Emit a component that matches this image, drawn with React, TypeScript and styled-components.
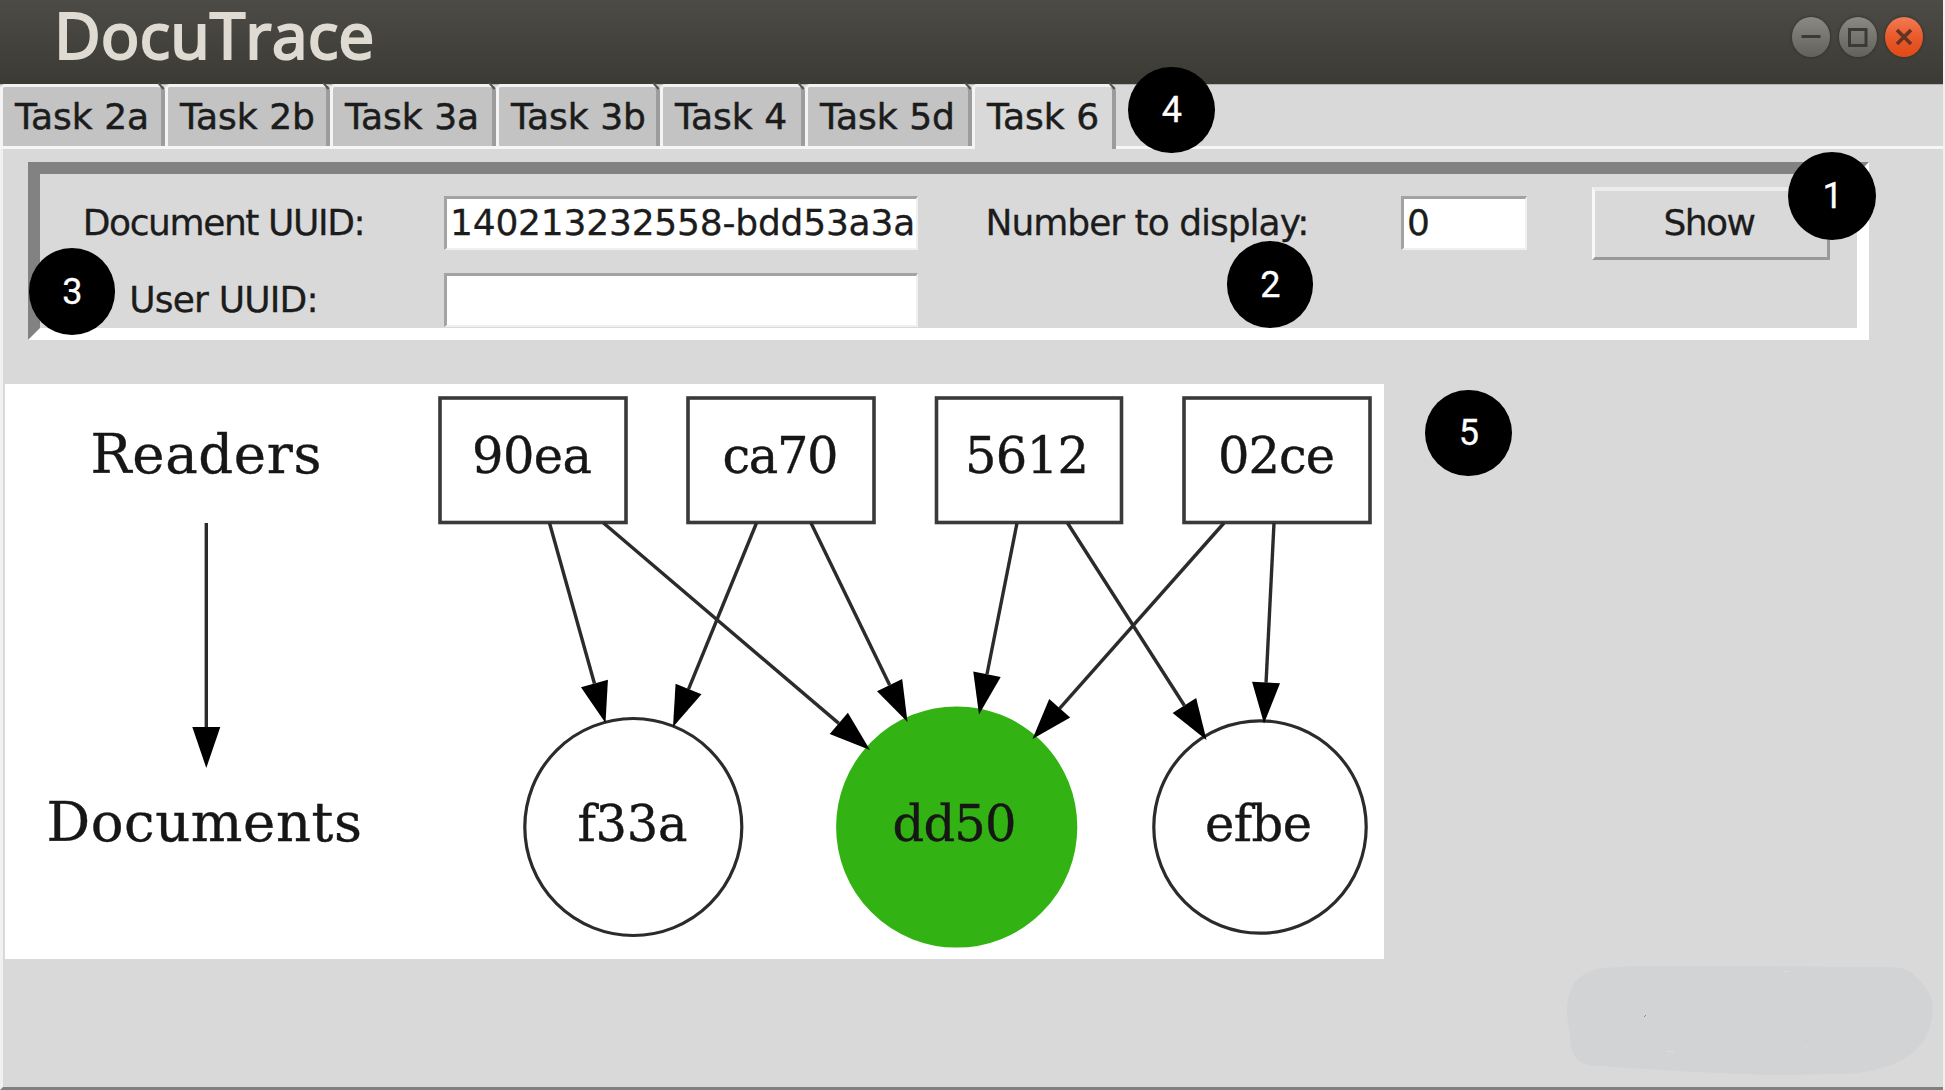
import React from "react";
import styled, { createGlobalStyle } from "styled-components";

const GlobalStyle = createGlobalStyle`
  * { box-sizing: border-box; }
  body { margin: 0; background: #d9d9d9; }
`;

const sans = `"DejaVu Sans", Verdana, sans-serif`;

const Window = styled.div`
  position: relative;
  display: flex;
  flex-direction: column;
  width: 1945px;
  height: 1090px;
  background: #d9d9d9;
  border-right: 2px solid #efefef;
  font-family: ${sans};
  color: #1c1c1c;
`;

const TitleBar = styled.header`
  display: flex;
  align-items: center;
  justify-content: space-between;
  flex: none;
  height: 84px;
  padding: 0 20px 10px 54px;
  background: linear-gradient(#4c4b45, #3b3a35);
`;

const Title = styled.h1`
  margin: 0 0 4px;
  font-family: "Noto Sans", sans-serif;
  font-size: 64px;
  font-weight: 400;
  font-kerning: none;
  line-height: 70px;
  color: #dfdbd2;
  -webkit-text-stroke: 2px #dfdbd2;
`;

const WindowButtons = styled.div`
  display: flex;
  gap: 8.5px;
`;

const WindowButton = styled.button<{ $close?: boolean }>`
  display: flex;
  align-items: center;
  justify-content: center;
  width: 38px;
  height: 40px;
  padding: 0;
  border: 0;
  border-radius: 50%;
  background: ${(p) => (p.$close ? "linear-gradient(#f37a56, #e95a2b 50%, #df4a16)" : "linear-gradient(#8a8982, #62615b)")};
  box-shadow: 0 0 2px 1px rgba(45, 44, 40, 0.55);
`;

const TabStrip = styled.nav`
  display: flex;
  flex: none;
  height: 65px;
  background: linear-gradient(#b4b4b2 0 1px, #d9d9d9 1px 62px, #f6f6f6 62px);
`;

const Tab = styled.div<{ $width: number; $active?: boolean }>`
  position: relative;
  width: ${(p) => p.$width}px;
  height: ${(p) => (p.$active ? 65 : 62)}px;
  padding: 9px 0 0 12px;
  border: solid;
  border-width: 3px 4px 0 3px;
  border-color: #f1f1f1 #9c9c9c transparent #f4f4f4;
  border-radius: 5px 7px 0 0;
  background: ${(p) => (p.$active ? "#d9d9d9" : "#c3c3c3")};
  font-size: 36px;
  line-height: 42px;
  white-space: nowrap;
  -webkit-text-stroke: 0.5px #1c1c1c;

  &::after {
    content: "";
    position: absolute;
    top: -2px;
    right: -4px;
    width: 8px;
    height: 2px;
    background: #55544f;
    transform: rotate(48deg);
  }
`;

const Page = styled.main`
  display: flex;
  flex-direction: column;
  align-items: flex-start;
  flex: 1;
  border-left: 3px solid #f1f1f1;
  border-bottom: 3px solid #808080;
  padding: 13px 0 0 2px;
`;

const QueryFrame = styled.form`
  display: grid;
  grid-template-columns: 367px 548px 384px 250px 244px;
  grid-template-rows: 98px 55px;
  width: 1841px;
  height: 178px;
  margin: 0 0 44px 23px;
  border: 12px solid;
  border-color: #828282 #fff #fff #828282;
  align-items: center;
  justify-items: center;
`;

const Label = styled.label<{ $track: number }>`
  font-size: 36px;
  line-height: 42px;
  letter-spacing: ${(p) => p.$track}px;
  white-space: nowrap;
  -webkit-text-stroke: 0.3px #1c1c1c;
`;

const Entry = styled.input<{ $width: number }>`
  width: ${(p) => p.$width}px;
  height: 54px;
  padding: 0 0 3px 3px;
  border: solid;
  border-width: 3px 2px 2px 3px;
  border-color: #a3a3a3 #f0f0f0 #f0f0f0 #a3a3a3;
  border-radius: 0;
  outline: 0;
  background: #fff;
  color: #1c1c1c;
  font: 36px ${sans};
  letter-spacing: -0.2px;
  -webkit-text-stroke: 0.3px #1c1c1c;
`;

const ShowButton = styled.button`
  width: 238px;
  height: 73px;
  margin-top: 1px;
  padding: 0 4px 4px 0;
  border: solid;
  border-width: 4px 3px 3px 3px;
  border-color: #ececec #999 #999 #f8f8f8;
  background: #d9d9d9;
  color: #1c1c1c;
  font: 36px ${sans};
  letter-spacing: -1.5px;
  -webkit-text-stroke: 0.3px #1c1c1c;
`;

const Graph = styled.svg`
  display: block;
  background: #fff;
  font-family: "DejaVu Serif", serif;
  fill: #161616;

  text {
    stroke: #161616;
    stroke-width: 0.4px;
  }
`;

const Badge = styled.span<{ $x: number; $y: number; $size?: number }>`
  position: absolute;
  left: ${(p) => p.$x}px;
  top: ${(p) => p.$y}px;
  display: flex;
  align-items: center;
  justify-content: center;
  width: ${(p) => p.$size ?? 86.5}px;
  height: ${(p) => p.$size ?? 86.5}px;
  padding: 1px 0 0 1px;
  border-radius: 50%;
  background: #000;
  color: #fff;
  font: 400 36px Roboto, sans-serif;
  -webkit-text-stroke: 0.3px #fff;
`;

const Smudge = styled.svg`
  position: absolute;
  left: 1555px;
  top: 956px;
`;

const tabs = [
  { name: "Task 2a", width: 165 },
  { name: "Task 2b", width: 165 },
  { name: "Task 3a", width: 166 },
  { name: "Task 3b", width: 164 },
  { name: "Task 4", width: 145 },
  { name: "Task 5d", width: 167 },
  { name: "Task 6", width: 144, active: true },
];

const readers = [
  { id: "90ea", x: 440, w: 186, tx: 472, tw: 120 },
  { id: "ca70", x: 688, w: 186, tx: 722.5, tw: 116 },
  { id: "5612", x: 936.5, w: 185, tx: 965, tw: 124 },
  { id: "02ce", x: 1184, w: 186, tx: 1218, tw: 117 },
];

const documents = [
  { id: "f33a", cx: 633.3, r: 108.5, tx: 577.5, tw: 110 },
  { id: "dd50", cx: 956.7, r: 119, tx: 892.5, tw: 124, selected: true },
  { id: "efbe", cx: 1260, r: 106.2, tx: 1205, tw: 107 },
];

type Edge = [number, number, number, number];
const edges: Edge[] = [
  [206.3, 523, 206.3, 768],
  [549.5, 523, 605.5, 723],
  [603.5, 523, 870, 750],
  [756.5, 523, 673, 727],
  [811, 523, 907.5, 722],
  [1017, 523, 979, 714.5],
  [1067.5, 523, 1206.5, 740],
  [1224, 523, 1032.5, 739],
  [1274, 523, 1264, 723.5],
];

function Arrow({ edge: [x1, y1, x2, y2] }: { edge: Edge }) {
  const len = Math.hypot(x2 - x1, y2 - y1);
  const ux = (x2 - x1) / len;
  const uy = (y2 - y1) / len;
  const bx = x2 - ux * 41;
  const by = y2 - uy * 41;
  const points = `${x2},${y2} ${bx - uy * 14},${by + ux * 14} ${bx + uy * 14},${by - ux * 14}`;
  return (
    <>
      <line x1={x1} y1={y1} x2={bx} y2={by} stroke="#2b2b2b" strokeWidth={3.4} />
      <polygon points={points} fill="#000" />
    </>
  );
}

export default function App() {
  return (
    <Window>
      <GlobalStyle />
      <TitleBar>
        <Title>DocuTrace</Title>
        <WindowButtons>
          <WindowButton aria-label="Minimize">
            <svg width="38" height="40" stroke="#3b3a35" strokeWidth="3" fill="none">
              <path d="M9.500 19.500H28.500" />
            </svg>
          </WindowButton>
          <WindowButton aria-label="Maximize">
            <svg width="38" height="40" stroke="#3b3a35" strokeWidth="3" fill="none">
              <rect x="10.500" y="12.500" width="16.500" height="16" />
            </svg>
          </WindowButton>
          <WindowButton aria-label="Close" $close>
            <svg width="38" height="40" stroke="#633324" strokeWidth="3.600" fill="none">
              <path d="M12 13L26 27M26 13L12 27" />
            </svg>
          </WindowButton>
        </WindowButtons>
      </TitleBar>

      <TabStrip>
        {tabs.map((t) => (
          <Tab key={t.name} $width={t.width} $active={t.active}>
            {t.name}
          </Tab>
        ))}
      </TabStrip>

      <Page>
        <QueryFrame>
          <Label $track={-1.4}>Document UUID:</Label>
          <Entry $width={474} defaultValue="140213232558-bdd53a3a" />
          <Label $track={-1}>Number to display:</Label>
          <Entry $width={126} defaultValue="0" />
          <ShowButton type="button">Show</ShowButton>
          <Label $track={-0.8}>User UUID:</Label>
          <Entry $width={474} defaultValue="" />
        </QueryFrame>

        <Graph width="1379" height="575" viewBox="5 384 1379 575">
          <text x="90.500" y="473" fontSize="54.500" textLength="231">Readers</text>
          <text x="46.500" y="840.500" fontSize="54.500" textLength="315.500">Documents</text>
          {readers.map((n) => (
            <g key={n.id}>
              <rect x={n.x} y={398} width={n.w} height={124.5} fill="#fff" stroke="#3a3a3a" strokeWidth={3.6} />
              <text x={n.tx} y={473} fontSize={49.5} textLength={n.tw}>{n.id}</text>
            </g>
          ))}
          {documents.map((n) => (
            <g key={n.id}>
              <circle cx={n.cx} cy={827} r={n.r} fill={n.selected ? "#33b313" : "#fff"} stroke={n.selected ? "#33b313" : "#2b2b2b"} strokeWidth={3.2} />
              <text x={n.tx} y={840.5} fontSize={49.5} textLength={n.tw}>{n.id}</text>
            </g>
          ))}
          {edges.map((e) => (
            <Arrow key={e.join()} edge={e} />
          ))}
        </Graph>
      </Page>

      <Smudge width="388" height="126" viewBox="1555 956 388 126">
        <path
          d="M1567 1015C1566 985 1580 970 1605 968Q1640 965 1680 966L1890 967Q1906 967 1914 975Q1933 992 1933 1008Q1932 1042 1905 1058Q1880 1073 1840 1074L1770 1075Q1710 1073 1660 1070L1600 1066Q1572 1067 1571 1043Z"
          fill="#d2d3d4"
        />
        <path d="M1644 1017l2-2" stroke="#8b8d8e" strokeWidth="1" />
        <path d="M1666 1051.500h8M1783 971.500h6M1805 1046.500h2" stroke="#dcdcdc" strokeWidth="1" />
      </Smudge>

      <Badge $x={1788} $y={151.5} $size={88}>1</Badge>
      <Badge $x={1226.5} $y={241}>2</Badge>
      <Badge $x={28.5} $y={248}>3</Badge>
      <Badge $x={1128} $y={66.5}>4</Badge>
      <Badge $x={1425} $y={389.5}>5</Badge>
    </Window>
  );
}
